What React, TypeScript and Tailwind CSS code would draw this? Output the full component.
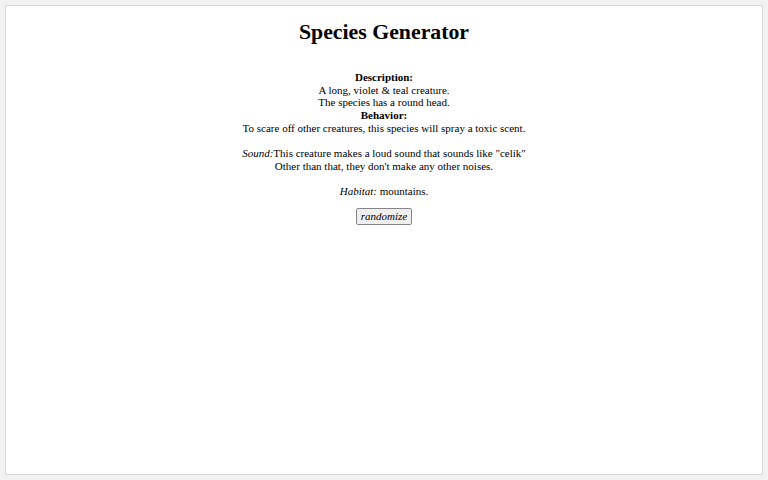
export default function App() {
  return (
    <div className="h-[480px] w-[768px] bg-[#f2f2f2] p-[5px]">
      <div
        className="h-[470px] border border-[#dadada] bg-white text-center text-[11px] leading-[1.15] text-black"
        style={{ fontFamily: '"Liberation Serif", "Times New Roman", serif' }}
      >
        <h1 className="mt-[14px] mb-[26px] text-[21.8px] font-bold leading-[1.15]">
          Species Generator
        </h1>
        <div>
          <b>Description:</b>
          <br />
          A long, violet &amp; teal creature.
          <br />
          The species has a round head.
          <br />
          <b>Behavior:</b>
          <br />
          To scare off other creatures, this species will spray a toxic scent.
          <br />
          <br />
          <i>Sound:</i>This creature makes a loud sound that sounds like "celik"
          <br />
          Other than that, they don't make any other noises.
          <br />
          <br />
          <i>Habitat:</i> mountains.
        </div>
        <div className="mt-[11px]">
          <button className="rounded-[2px] border border-[#858585] bg-[#efefef] px-[4px] py-[1px] text-[11px] italic leading-[1.15]">
            randomize
          </button>
        </div>
      </div>
    </div>
  );
}
